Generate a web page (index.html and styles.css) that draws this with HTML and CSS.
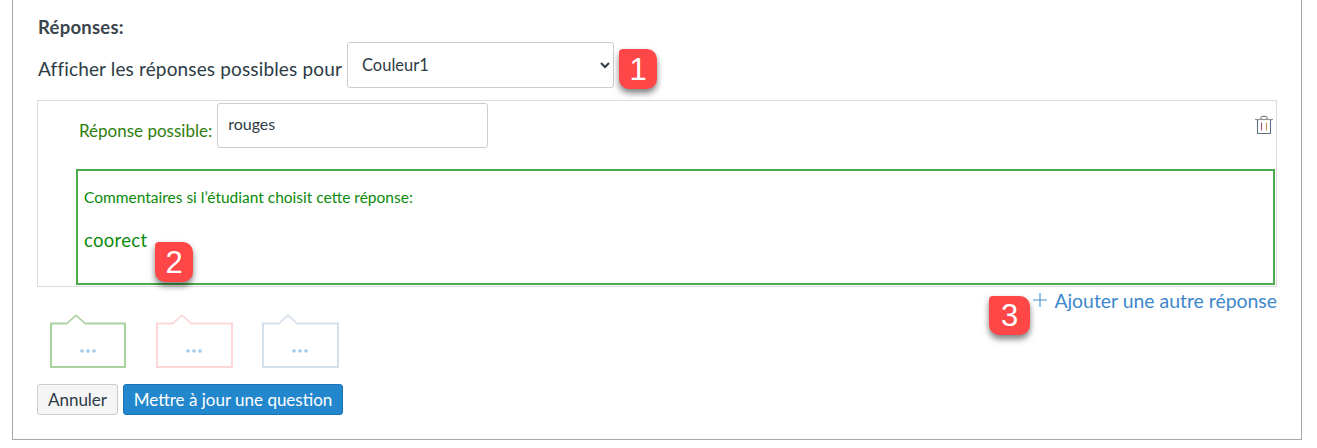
FILE: index.html
```html
<!DOCTYPE html>
<html lang="fr">
<head>
<meta charset="utf-8">
<title>Réponses</title>
<link rel="stylesheet" href="styles.css">
</head>
<body>
<main class="frame">
  <h3 class="heading">Réponses:</h3>
  <div class="picker">
    <label class="picker-label" for="blank">Afficher les réponses possibles pour</label>
    <select class="picker-select" id="blank"><option>Couleur1</option></select>
    <span class="badge badge-one">1</span>
  </div>
  <section class="panel">
    <div class="answer-row">
      <label class="answer-label" for="answer">Réponse possible:</label>
      <input class="answer-input" id="answer" type="text" value="rouges">
      <svg class="trash" width="20" height="20" viewBox="0 0 20 20" fill="none">
        <path d="M1 4.500H19" stroke="#8f9296" stroke-width="1.200"/>
        <path d="M7 4V2.600C7 1.900 7.500 1.400 8.200 1.400H11.800C12.500 1.400 13 1.900 13 2.600V4" stroke="#66686c" stroke-width="1"/>
        <path d="M3.500 5V18.500H16.500V5" stroke="#5f7080" stroke-width="1.100"/>
        <path d="M7.500 7.500V15.500" stroke="#a8557c" stroke-width="1.200"/>
        <path d="M12.500 7.500V15.500" stroke="#c79a56" stroke-width="1.200"/>
      </svg>
    </div>
    <div class="comment">
      <p class="comment-title">Commentaires si l’étudiant choisit cette réponse:</p>
      <p class="comment-text">coorect</p>
      <span class="badge badge-two">2</span>
    </div>
  </section>
  <div class="add-row">
    <span class="badge badge-three">3</span>
    <a class="add-link" href="#">
      <svg class="plus" width="16" height="16" viewBox="0 0 16 16" fill="none"><path d="M8 1V15M1 8H15" stroke="#4a90d0" stroke-width="1.100"/></svg>
      Ajouter une autre réponse
    </a>
  </div>
  <div class="flags">
    <svg class="flag" width="77" height="54" viewBox="0 0 77 54" fill="none"><path d="M1 9.500H17L26 1.500L35 9.500H75V53H1Z" stroke="#a9d3a0" stroke-width="2"/><path d="M17 10.500L26 2.500L35 10.500Z" fill="#fff"/><circle cx="32" cy="37" r="1.800" fill="#9fcaea"/><circle cx="38" cy="37" r="1.800" fill="#9fcaea"/><circle cx="44" cy="37" r="1.800" fill="#9fcaea"/></svg>
    <svg class="flag" width="77" height="54" viewBox="0 0 77 54" fill="none"><path d="M1 9.500H17L26 1.500L35 9.500H76V53H1Z" stroke="#fdd7d7" stroke-width="2"/><path d="M17 10.500L26 2.500L35 10.500Z" fill="#fff"/><circle cx="32" cy="37" r="1.800" fill="#9fcaea"/><circle cx="38" cy="37" r="1.800" fill="#9fcaea"/><circle cx="44" cy="37" r="1.800" fill="#9fcaea"/></svg>
    <svg class="flag" width="77" height="54" viewBox="0 0 77 54" fill="none"><path d="M1 9.500H17L26 1.500L35 9.500H76V53H1Z" stroke="#d5dfee" stroke-width="2"/><path d="M17 10.500L26 2.500L35 10.500Z" fill="#fff"/><circle cx="32" cy="37" r="1.800" fill="#9fcaea"/><circle cx="38" cy="37" r="1.800" fill="#9fcaea"/><circle cx="44" cy="37" r="1.800" fill="#9fcaea"/></svg>
  </div>
  <div class="actions">
    <button class="btn btn-cancel" type="button">Annuler</button>
    <button class="btn btn-primary" type="button">Mettre à jour une question</button>
  </div>
</main>
</body>
</html>
```
FILE: styles.css
```css
* { box-sizing: border-box; }

html, body { margin: 0; padding: 0; background: #fff; }

body {
  font-family: Lato, "Liberation Sans", sans-serif;
  color: #2d3b45;
  height: 448px;
  overflow: hidden;
}

.frame {
  margin-left: 12px;
  width: 1290px;
  height: 440px;
  padding: 17px 24px 0 24px;
  border: 1px solid #a8a8a8;
  border-top: 0;
}

.heading {
  margin: 0 0 0 1px;
  font-size: 18.500px;
  line-height: 20px;
  font-weight: 700;
  color: #3a444c;
  letter-spacing: 0.25px;
}

.picker {
  position: relative;
  display: flex;
  align-items: flex-start;
  margin: 5px 0 0 1px;
  height: 58px;
}

.picker-label {
  font-size: 19px;
  line-height: 24px;
  margin-top: 15px;
  margin-right: 5px;
  white-space: nowrap;
  letter-spacing: 0.15px;
}

.picker-select {
  width: 267px;
  height: 46px;
  padding: 0 8px 0 10px;
  font: 16.500px Lato, "Liberation Sans", sans-serif;
  color: #2d3b45;
  background: #fff;
  border: 1px solid #c7cdd1;
  border-radius: 3px;
}

.badge {
  position: absolute;
  display: flex;
  align-items: center;
  justify-content: center;
  width: 38px;
  height: 40px;
  font: 31px/1 "Liberation Sans", Arial, sans-serif;
  color: #fff;
  background: #ff4747;
  border-radius: 4px 10px 10px 10px;
  box-shadow: 0 4px 6px rgba(0, 0, 0, 0.5);
}

.badge-one { left: 581px; top: 7px; }
.badge-two { left: 77px; top: 71px; }
.badge-three { left: 0; top: 9px; width: 41px; height: 39px; }

.panel {
  height: 187px;
  padding: 2px 1px 1px 38px;
  border: 1px solid #dcdcdc;
}

.answer-row {
  position: relative;
  display: flex;
  align-items: flex-start;
  height: 66px;
}

.answer-label {
  margin: 0 0 0 3px;
  padding-top: 18px;
  font-size: 17px;
  line-height: 20px;
  color: #2e7d0e;
  white-space: nowrap;
}

.answer-input {
  width: 271px;
  height: 45px;
  margin-left: 5px;
  padding: 0 10px 4px;
  font: 16px Lato, "Liberation Sans", sans-serif;
  color: #2d3b45;
  border: 1px solid #c7cdd1;
  border-radius: 3px;
}

.trash {
  position: absolute;
  right: 1px;
  top: 12px;
}

.comment {
  position: relative;
  height: 116px;
  padding: 16px 6px 0;
  border: 2px solid #4aab4a;
  color: #0a8a0a;
}

.comment-title {
  margin: 0;
  font-size: 15.500px;
  line-height: 20px;
}

.comment-text {
  margin: 21px 0 0;
  font-size: 18.500px;
  line-height: 24px;
  letter-spacing: 0.3px;
}

.add-row {
  position: relative;
  display: flex;
  justify-content: flex-end;
  height: 27px;
  padding-top: 2px;
  margin-left: 952px;
}

.add-link {
  display: flex;
  align-items: center;
  gap: 6px;
  height: 22px;
  font-size: 19.400px;
  color: #3d87cb;
  text-decoration: none;
  white-space: nowrap;
}

.plus { flex: none; }

.flags {
  display: flex;
  gap: 29px;
  padding-left: 13px;
}

.flag { display: block; flex: none; }

.actions {
  display: flex;
  gap: 5px;
  margin-top: 16px;
}

.btn {
  height: 31px;
  padding: 0;
  font: 17px/1 Lato, "Liberation Sans", sans-serif;
  border-radius: 3px;
}

.btn-cancel {
  width: 81px;
  color: #2d3b45;
  background: #f5f5f5;
  border: 1px solid #c7cdd1;
}

.btn-primary {
  width: 220px;
  color: #fff;
  background: #2287cc;
  border: 1px solid #1b74b3;
}
```
